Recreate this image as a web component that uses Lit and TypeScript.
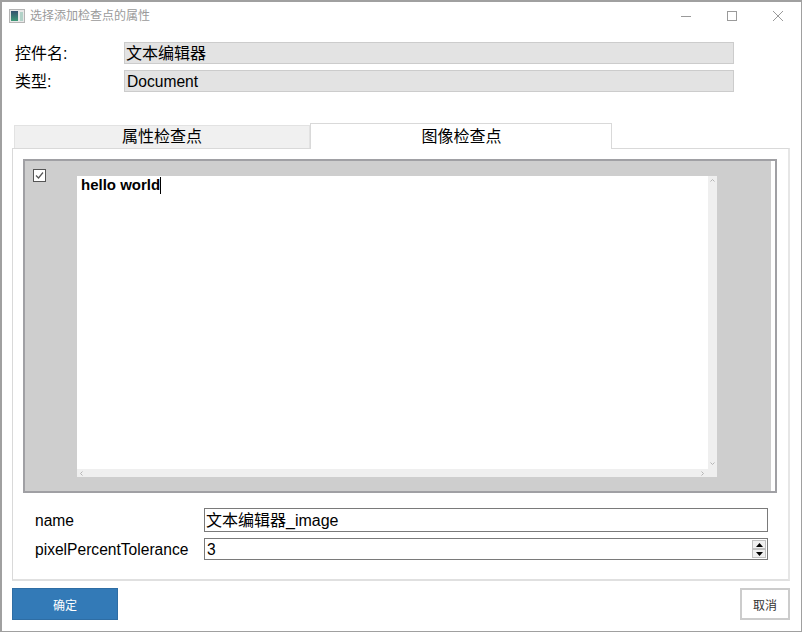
import { LitElement, html, css } from "lit";
import { customElement } from "lit/decorators.js";

@customElement("app-root")
export class AppRoot extends LitElement {
  static styles = css`
    :host {
      display: flex;
      flex-direction: column;
      width: 802px;
      height: 632px;
      box-sizing: border-box;
      border: 1px solid #a0a0a0;
      border-width: 2px 1px 1px 2px;
      background: #fff;
      font-family: "Liberation Sans", "Noto Sans CJK SC", sans-serif;
      color: #000;
      overflow: hidden;
    }
    .titlebar {
      height: 28px;
      display: flex;
      align-items: center;
      padding-left: 7px;
      flex: none;
    }
    .appicon { width: 16px; height: 14px; margin-right: 5px; flex: none; }
    .title { font-size: 12px; line-height: 28px; height: 28px; color: #9a9a9a; flex: 1; }
    .winbtns { display: flex; align-items: center; }
    .winbtn { width: 46px; height: 28px; display: flex; align-items: center; justify-content: center; }
    .winbtn svg { width: 12px; height: 12px; display: block; }
    .form {
      display: grid;
      grid-template-columns: 110px 610px;
      grid-auto-rows: 22px;
      row-gap: 6px;
      padding: 12px 0 0 12px;
      flex: none;
    }
    .lab { font-size: 16px; line-height: 24px; padding-left: 1px; }
    .ro {
      box-sizing: border-box;
      background: #e3e3e3;
      border: 1px solid #cccccc;
      font-size: 15.6px;
      line-height: 22px;
      padding-left: 2px;
      white-space: nowrap;
    }
    .ro.cjk { font-size: 16px; padding-left: 1px; }
    .tabs {
      display: flex;
      align-items: flex-end;
      margin: 31px 0 0 12px;
      height: 26px;
      flex: none;
      position: relative;
      z-index: 1;
    }
    .tab { box-sizing: border-box; text-align: center; font-size: 16px; }
    .tab.off {
      width: 296px;
      height: 23px;
      background: #f0f0f0;
      border: 1px solid #e2e2e2;
      border-bottom: none;
      line-height: 22px;
      margin-bottom: 1px;
    }
    .tab.on {
      width: 302px;
      height: 26px;
      background: #fff;
      border: 1px solid #d9d9d9;
      border-bottom: none;
      line-height: 25px;
      padding-left: 1px;
    }
    .panel {
      box-sizing: border-box;
      width: 778px;
      height: 433px;
      margin: -1px 0 0 10px;
      border: 1px solid #d9d9d9;
      border-right: 2px solid #e6e6e6;
      border-bottom: 2px solid #e0e0e0;
      padding: 10px 0 0 10px;
      flex: none;
    }
    .imgbox {
      box-sizing: border-box;
      width: 754px;
      height: 334px;
      border: 2px solid #a0a0a4;
      background: #fff;
      display: flex;
    }
    .gray {
      width: 746px;
      height: 100%;
      background: #cecece;
      display: flex;
      flex: none;
      padding: 8px 0 0 8px;
      box-sizing: border-box;
    }
    .check { width: 13px; height: 13px; flex: none; }
    .editor {
      margin: 7px 0 0 31px;
      width: 640px;
      height: 301px;
      background: #fff;
      display: grid;
      grid-template-columns: 1fr 9px;
      grid-template-rows: 1fr 8px;
      flex: none;
    }
    .doc { padding: 0 0 0 4px; font-size: 15px; font-weight: 700; line-height: 18px; }
    .caret { display: inline-block; width: 1px; height: 17px; background: #000; vertical-align: -4px; }
    .vbar, .hbar, .corner { background: #efefef; display: flex; justify-content: space-between; }
    .vbar { flex-direction: column; align-items: center; padding: 2px 0 3px; box-sizing: border-box; }
    .hbar { align-items: center; padding: 0 3px 0 2px; box-sizing: border-box; }
    .vbar svg, .hbar svg { width: 5px; height: 5px; display: block; }
    .params {
      display: grid;
      grid-template-columns: 169px 564px;
      grid-template-rows: 24px 22px;
      row-gap: 6px;
      margin: 15px 0 0 12px;
    }
    .plab { font-size: 15.6px; line-height: 24px; color: #000; white-space: nowrap; }
    .plab.first { line-height: 26px; }
    .input {
      box-sizing: border-box;
      border: 1px solid #7a7a7a;
      font-size: 16px;
      line-height: 22px;
      display: flex;
      align-items: flex-start;
      justify-content: space-between;
    }
    .input.text { padding-left: 1px; line-height: 23px; }
    .input.num { padding-left: 2px; font-size: 15.6px; }
    .spin {
      width: 14px;
      height: 18px;
      margin: 1px 1px 0 0;
      display: flex;
      flex-direction: column;
      flex: none;
    }
    .spin div {
      flex: 1;
      box-sizing: border-box;
      background: #f0f0f0;
      border: 1px solid #c0c0c0;
      display: flex;
      align-items: center;
      justify-content: center;
    }
    .spin svg { width: 7px; height: 4px; display: block; }
    .footer {
      display: flex;
      justify-content: space-between;
      width: 778px;
      margin: 7px 0 0 10px;
      flex: none;
    }
    .btn { box-sizing: border-box; height: 32px; font-size: 12px; display: flex; align-items: center; justify-content: center; }
    .ok { width: 106px; background: #337ab7; border: 1px solid #2e6da4; color: #fff; }
    .cancel { width: 50px; background: #fff; border: 2px solid #cccccc; color: #333; }
  `;

  render() {
    return html`
      <div class="titlebar">
        <svg class="appicon" viewBox="0 0 16 14">
          <defs>
            <linearGradient id="g" x1="0" y1="0" x2="0" y2="1">
              <stop offset="0" stop-color="#34506e"/>
              <stop offset="1" stop-color="#3f9a78"/>
            </linearGradient>
          </defs>
          <rect x="0.5" y="0.5" width="15" height="13" fill="#e8e8e8" stroke="#b4b4b4"/>
          <rect x="2" y="2" width="7" height="10" fill="url(#g)"/>
          <rect x="11" y="3" width="3" height="9" fill="#b2d2c8"/>
        </svg>
        <span class="title">选择添加检查点的属性</span>
        <div class="winbtns">
          <div class="winbtn"><svg viewBox="0 0 12 12"><path d="M1 6.5h10" stroke="#9a9a9a" fill="none"/></svg></div>
          <div class="winbtn"><svg viewBox="0 0 12 12"><rect x="1.5" y="1.5" width="9" height="9" stroke="#9a9a9a" fill="none"/></svg></div>
          <div class="winbtn"><svg viewBox="0 0 12 12"><path d="M1 1l10 10M11 1L1 11" stroke="#9a9a9a" fill="none"/></svg></div>
        </div>
      </div>
      <div class="form">
        <div class="lab">控件名:</div><div class="ro cjk">文本编辑器</div>
        <div class="lab">类型:</div><div class="ro">Document</div>
      </div>
      <div class="tabs">
        <div class="tab off">属性检查点</div>
        <div class="tab on">图像检查点</div>
      </div>
      <div class="panel">
        <div class="imgbox">
          <div class="gray">
            <svg class="check" viewBox="0 0 13 13">
              <rect x="0.5" y="0.5" width="12" height="12" fill="#fff" stroke="#555"/>
              <path d="M3 6.5l2.5 2.5 4.5-5.5" stroke="#555" fill="none" stroke-width="1.2"/>
            </svg>
            <div class="editor">
              <div class="doc">hello world<span class="caret"></span></div>
              <div class="vbar">
                <svg viewBox="0 0 5 5"><path d="M.5 3.5l2-2 2 2" stroke="#b5b5b5" fill="none"/></svg>
                <svg viewBox="0 0 5 5"><path d="M.5 1.5l2 2 2-2" stroke="#b5b5b5" fill="none"/></svg>
              </div>
              <div class="hbar">
                <svg viewBox="0 0 5 5"><path d="M3.5.5l-2 2 2 2" stroke="#b5b5b5" fill="none"/></svg>
                <svg viewBox="0 0 5 5"><path d="M1.5.5l2 2-2 2" stroke="#b5b5b5" fill="none"/></svg>
              </div>
              <div class="corner"></div>
            </div>
          </div>
        </div>
        <div class="params">
          <div class="plab first">name</div>
          <div class="input text">文本编辑器_image</div>
          <div class="plab">pixelPercentTolerance</div>
          <div class="input num">3
            <div class="spin">
              <div><svg viewBox="0 0 7 4"><path d="M3.5 0L7 4H0z" fill="#000"/></svg></div>
              <div><svg viewBox="0 0 7 4"><path d="M0 0h7L3.5 4z" fill="#000"/></svg></div>
            </div>
          </div>
        </div>
      </div>
      <div class="footer">
        <div class="btn ok">确定</div>
        <div class="btn cancel">取消</div>
      </div>
    `;
  }
}
